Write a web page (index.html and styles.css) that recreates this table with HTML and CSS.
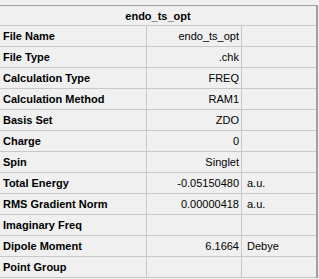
FILE: index.html
```html
<!DOCTYPE html>
<html lang="en">
<head>
    <meta charset="UTF-8">
    <meta name="viewport" content="width=device-width, initial-scale=1.0">
    <title>endo_ts_opt</title>
    <link rel="stylesheet" href="styles.css">
</head>
<body>
    <div class="props">
        <div class="props-title">endo_ts_opt</div>
        <div class="props-grid">
            <div class="name">File Name</div><div class="value">endo_ts_opt</div><div class="unit"></div>
            <div class="name">File Type</div><div class="value">.chk</div><div class="unit"></div>
            <div class="name">Calculation Type</div><div class="value">FREQ</div><div class="unit"></div>
            <div class="name">Calculation Method</div><div class="value">RAM1</div><div class="unit"></div>
            <div class="name">Basis Set</div><div class="value">ZDO</div><div class="unit"></div>
            <div class="name">Charge</div><div class="value">0</div><div class="unit"></div>
            <div class="name">Spin</div><div class="value">Singlet</div><div class="unit"></div>
            <div class="name">Total Energy</div><div class="value">-0.05150480</div><div class="unit">a.u.</div>
            <div class="name">RMS Gradient Norm</div><div class="value">0.00000418</div><div class="unit">a.u.</div>
            <div class="name">Imaginary Freq</div><div class="value"></div><div class="unit"></div>
            <div class="name">Dipole Moment</div><div class="value">6.1664</div><div class="unit">Debye</div>
            <div class="name">Point Group</div><div class="value"></div><div class="unit"></div>
        </div>
    </div>
</body>
</html>
```

FILE: styles.css
```css
/* property sheet for a job file */
body {
    margin: 0;
    background-color: #f0f0f0;
    font-family: "Liberation Sans", Arial, sans-serif;
    font-size: 11px;
    color: #000;
}

.props {
    margin-top: 5px;
    width: 316px;
    border-top: 1px solid #a0a0a0;
    border-right: 2px solid #a0a0a0;
}

.props-title {
    height: 19px;
    line-height: 21px;
    text-align: center;
    font-weight: bold;
    border-bottom: 1px solid #c8c8c8;
}

.props-grid {
    display: grid;
    grid-template-columns: 147px 95px 74px;
    grid-auto-rows: 21px;
}

.props-grid > div {
    box-sizing: border-box;
    border-bottom: 1px solid #c8c8c8;
    line-height: 20px;
    white-space: nowrap;
    overflow: hidden;
}

.name {
    padding-left: 3px;
    font-weight: bold;
    border-right: 1px solid #c8c8c8;
}

.value {
    padding-right: 2px;
    text-align: right;
    border-right: 1px solid #c8c8c8;
}

.unit {
    padding-left: 5px;
}
```
